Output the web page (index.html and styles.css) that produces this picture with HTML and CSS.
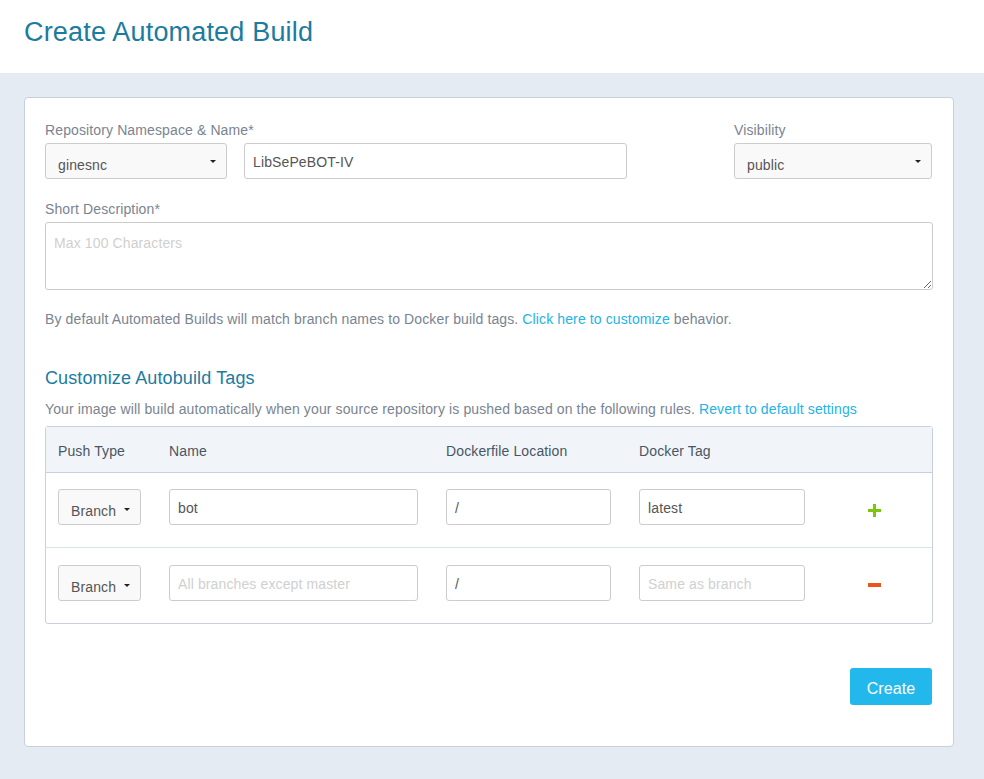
FILE: index.html
```html
<!DOCTYPE html>
<html>
<head>
<meta charset="utf-8">
<title>Create Automated Build</title>
<link rel="stylesheet" href="styles.css">
</head>
<body>
<header class="page-header">
  <h1 class="page-title">Create Automated Build</h1>
</header>
<main class="page-body">
  <section class="card">
    <div class="top-row">
      <div class="name-group">
        <div class="field-label">Repository Namespace &amp; Name*</div>
        <div class="name-controls">
          <div class="select select-ns"><span>ginesnc</span><i class="caret"></i></div>
          <input class="input input-name" type="text" value="LibSePeBOT-IV">
        </div>
      </div>
      <div class="vis-group">
        <div class="field-label">Visibility</div>
        <div class="select select-vis"><span>public</span><i class="caret"></i></div>
      </div>
    </div>

    <div class="field-label desc-label">Short Description*</div>
    <textarea class="textarea" placeholder="Max 100 Characters"></textarea>

    <p class="help">By default Automated Builds will match branch names to Docker build tags. <a href="#">Click here to customize</a> behavior.</p>

    <h2 class="section-title">Customize Autobuild Tags</h2>
    <p class="help help-tight">Your image will build automatically when your source repository is pushed based on the following rules. <a href="#">Revert to default settings</a></p>

    <div class="tags-table">
      <div class="t-row t-head">
        <div>Push Type</div>
        <div>Name</div>
        <div>Dockerfile Location</div>
        <div>Docker Tag</div>
        <div></div>
      </div>
      <div class="t-row">
        <div><div class="select select-branch"><span>Branch</span><i class="caret"></i></div></div>
        <div><input class="input input-tname" type="text" value="bot"></div>
        <div><input class="input input-loc" type="text" value="/"></div>
        <div><input class="input input-tag" type="text" value="latest"></div>
        <div class="action"><span class="plus"></span></div>
      </div>
      <div class="t-row">
        <div><div class="select select-branch"><span>Branch</span><i class="caret"></i></div></div>
        <div><input class="input input-tname" type="text" placeholder="All branches except master"></div>
        <div><input class="input input-loc" type="text" value="/"></div>
        <div><input class="input input-tag" type="text" placeholder="Same as branch"></div>
        <div class="action"><span class="minus"></span></div>
      </div>
    </div>

    <div class="footer">
      <button class="btn-create">Create</button>
    </div>
  </section>
</main>
</body>
</html>
```

FILE: styles.css
```css
* { box-sizing: border-box; }
html, body { margin: 0; padding: 0; }
body {
  font-family: "Liberation Sans", Arial, sans-serif;
  letter-spacing: 0.12px;
  background: #e5ebf3;
  color: #555;
  width: 984px;
  height: 779px;
  overflow: hidden;
}
.page-header {
  background: #fff;
  height: 73px;
  padding: 16px 24px 0;
}
.page-title {
  margin: 0;
  font-weight: normal;
  font-size: 27px;
  letter-spacing: 0.18px;
  line-height: 32px;
  color: #1b7c9f;
}
.page-body {
  padding: 24px 30px 33px 24px;
}
.card {
  background: #fff;
  border: 1px solid #c7d0dc;
  border-radius: 4px;
  padding: 22px 21px 40px 20px;
  height: 650px;
}
.top-row {
  display: flex;
  justify-content: space-between;
}
.field-label {
  font-size: 14px;
  line-height: 20px;
  color: #7a8491;
  margin-bottom: 3px;
}
.name-controls {
  display: flex;
  gap: 17px;
}
.select {
  position: relative;
  height: 36px;
  border: 1px solid #ccc;
  border-radius: 3px;
  background: #f9f9f9;
  font-size: 14px;
  color: #555;
  padding: 10px 12px 0;
  line-height: 22px;
}
.caret {
  position: absolute;
  right: 10px;
  top: 16px;
  width: 0;
  height: 0;
  border-left: 3px solid transparent;
  border-right: 3px solid transparent;
  border-top: 3px solid #222;
}
.select-ns { width: 182px; }
.select-vis { width: 198px; }
.input {
  height: 36px;
  border: 1px solid #ccc;
  border-radius: 3px;
  background: #fff;
  font-family: "Liberation Sans", Arial, sans-serif;
  letter-spacing: 0.12px;
  font-size: 14px;
  color: #555;
  padding: 2px 8px 0;
  outline: none;
}
.input::placeholder, .textarea::placeholder { color: #d0d0d0; }
.input-name { width: 383px; }
.desc-label { margin-top: 20px; margin-bottom: 3px; }
.textarea {
  display: block;
  width: 888px;
  height: 68px;
  border: 1px solid #ccc;
  border-radius: 3px;
  font-family: "Liberation Sans", Arial, sans-serif;
  letter-spacing: 0.12px;
  font-size: 14px;
  padding: 12px 8px 8px;
  color: #555;
  outline: none;
}
.help {
  margin: 18px 0 0;
  font-size: 14px;
  line-height: 22px;
  color: #7a8491;
}
.help a { color: #23b3e5; text-decoration: none; }
.section-title {
  margin: 37px 0 0;
  font-weight: normal;
  font-size: 18px;
  line-height: 22px;
  color: #1b7c9f;
}
.help-tight { margin-top: 9px; }
.tags-table {
  margin-top: 6px;
  width: 888px;
  border: 1px solid #c7d0dc;
  border-radius: 3px;
}
.t-row {
  display: grid;
  grid-template-columns: 111px 277px 193px 194px 1fr;
  padding: 16px 0 22px 12px;
  border-top: 1px solid #dde3ea;
  align-items: center;
}
.t-row + .t-row + .t-row { padding-top: 17px; }
.t-row.t-head {
  border-top: none;
  border-bottom: 1px solid #c7d0dc;
  background: #f1f5fa;
  padding: 14px 0 11px 12px;
  font-size: 14px;
  line-height: 20px;
  color: #4a5563;
}
.t-head + .t-row { border-top: none; }
.select-branch { width: 83px; padding-left: 12px; }
.select-branch .caret { right: 10px; top: 18px; }
.input-tname { width: 249px; }
.input-loc { width: 165px; }
.input-tag { width: 166px; }
.action { height: 36px; position: relative; }
.plus {
  position: absolute;
  left: 35px;
  top: 15px;
  width: 13px;
  height: 13px;
}
.plus::before, .plus::after {
  content: "";
  position: absolute;
  background: #7ac70c;
}
.plus::before { left: 0; top: 5px; width: 13px; height: 3px; }
.plus::after { left: 5px; top: 0; width: 3px; height: 13px; }
.minus {
  position: absolute;
  left: 35px;
  top: 18px;
  width: 13px;
  height: 4px;
  background: #e8561e;
}
.footer {
  display: flex;
  justify-content: flex-end;
  margin-top: 44px;
}
.btn-create {
  width: 82px;
  height: 37px;
  border: none;
  border-radius: 3px;
  background: #22b8eb;
  color: #fff;
  font-family: "Liberation Sans", Arial, sans-serif;
  letter-spacing: 0.12px;
  font-size: 16px;
  padding: 4px 0 0;
}
```
